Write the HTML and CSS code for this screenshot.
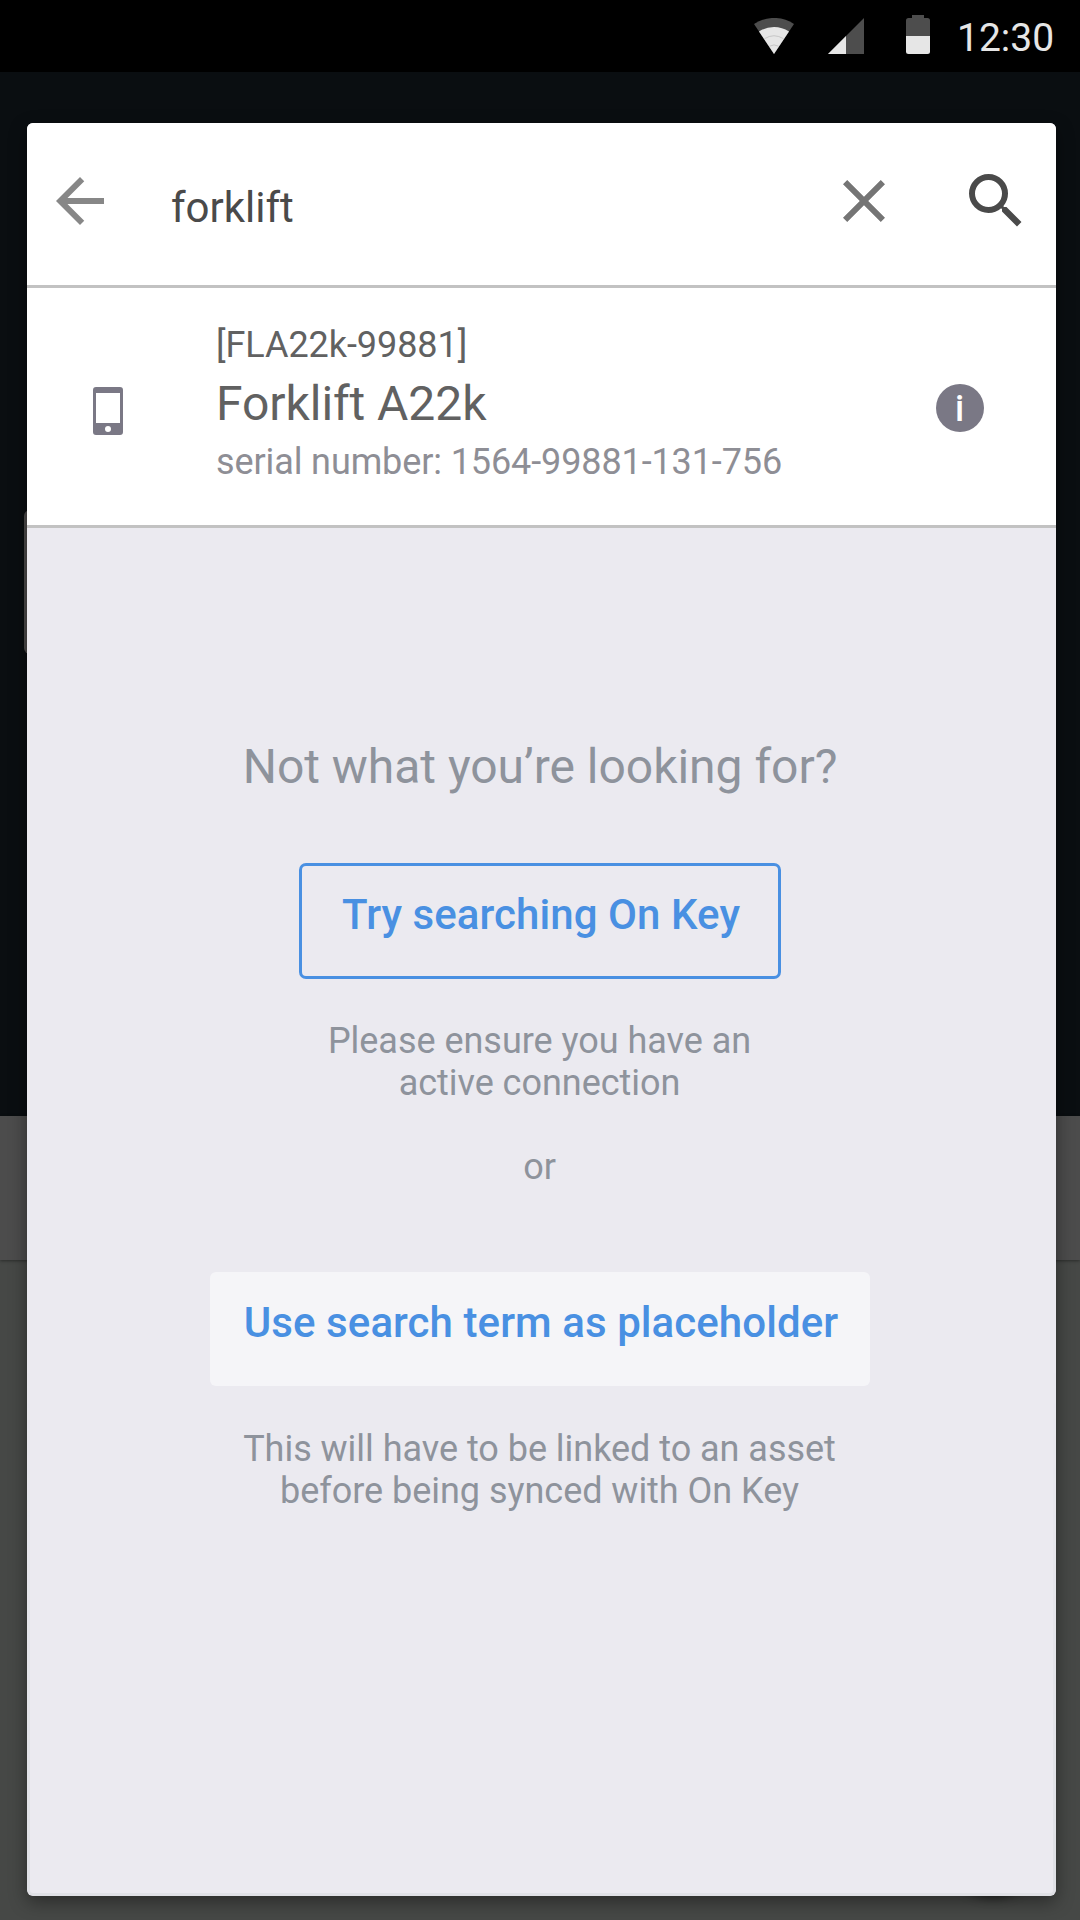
FILE: index.html
```html
<!DOCTYPE html>
<html lang="en">
<head>
<meta charset="utf-8">
<title>Asset search</title>
<link rel="stylesheet" href="styles.css">
</head>
<body>
<div class="screen">
  <div class="backdrop">
    <div class="backdrop-top"></div>
    <div class="backdrop-tabs"></div>
    <div class="backdrop-list"></div>
    <div class="backdrop-field"></div>
    <div class="backdrop-fab"></div>
  </div>
  <header class="status-bar">
    <svg class="wifi" width="40" height="36" viewBox="0 0 40 36">
      <path fill="#4d4d4d" d="M20 36L0 6a36 36 0 0 1 40 0z"/>
      <path fill="#e6e6e6" d="M20 36L5 13.5a27 27 0 0 1 30 0z"/>
      <path fill="none" stroke="#b8b8b8" stroke-width=".7" d="M10.5 20.7a18 18 0 0 1 19 0M15.5 28.2a9 9 0 0 1 9 0"/>
    </svg>
    <svg class="signal" width="36" height="36" viewBox="0 0 36 36">
      <path fill="#4d4d4d" d="M0 36L36 0v36z"/>
      <path fill="#e6e6e6" d="M0 36L18 18v18z"/>
    </svg>
    <svg class="battery" width="24" height="39" viewBox="0 0 24 39">
      <path fill="#4d4d4d" d="M6 0h12v3h3.5A2.5 2.5 0 0 1 24 5.500V21H0V5.500A2.500 2.500 0 0 1 2.500 3H6z"/>
      <path fill="#e6e6e6" d="M0 21h24v15.500a2.500 2.500 0 0 1-2.500 2.500h-19A2.500 2.500 0 0 1 0 36.500z"/>
    </svg>
    <span class="clock">12:30</span>
  </header>
  <main class="dialog">
    <div class="search-bar">
      <svg class="icon back" viewBox="0 0 24 24"><path d="M20 11H7.83l5.590-5.590L12 4l-8 8 8 8 1.410-1.410L7.830 13H20z"/></svg>
      <span class="query">forklift</span>
      <svg class="icon clear" viewBox="0 0 24 24"><path d="M19 6.410L17.590 5 12 10.590 6.410 5 5 6.410 10.590 12 5 17.590 6.410 19 12 13.410 17.590 19 19 17.590 13.410 12z"/></svg>
      <svg class="icon find" viewBox="0 0 24 24"><path d="M15.500 14h-.790l-.280-.270A6.470 6.470 0 0 0 16 9.500 6.500 6.500 0 1 0 9.500 16c1.610 0 3.090-.590 4.230-1.570l.270.280v.790l5 4.990L20.490 19zm-6 0a4.500 4.500 0 1 1 0-9 4.500 4.500 0 0 1 0 9z"/></svg>
    </div>
    <div class="result">
      <svg class="device" width="30" height="48" viewBox="0 0 30 48">
        <path fill="#7a7885" fill-rule="evenodd" d="M3 0h24a3 3 0 0 1 3 3v42a3 3 0 0 1-3 3H3a3 3 0 0 1-3-3V3a3 3 0 0 1 3-3zM3 6v30h24V6zM15 39a3 3 0 1 0 0 6 3 3 0 0 0 0-6z"/>
      </svg>
      <div class="result-text">
        <div class="code">[FLA22k-99881]</div>
        <div class="name">Forklift A22k</div>
        <div class="serial">serial number: 1564-99881-131-756</div>
      </div>
      <div class="info">i</div>
    </div>
    <div class="fallback">
      <h1 class="prompt">Not what you’re looking for?</h1>
      <button class="btn btn-outline">Try searching On Key</button>
      <p class="hint">Please ensure you have an<br>active connection</p>
      <p class="or">or</p>
      <button class="btn btn-flat">Use search term as placeholder</button>
      <p class="hint">This will have to be linked to an asset<br>before being synced with On Key</p>
    </div>
  </main>
</div>
</body>
</html>
```

FILE: styles.css
```css
* { box-sizing: border-box; }

body {
  margin: 0;
  font-family: Roboto, "Noto Sans", sans-serif;
}

.screen {
  position: relative;
  width: 1080px;
  height: 1920px;
  overflow: hidden;
}

/* dimmed page underneath the dialog */
.backdrop {
  position: absolute;
  inset: 0;
  display: flex;
  flex-direction: column;
}
.backdrop-top { height: 1116px; background: #0a0e11; }
.backdrop-tabs {
  position: relative;
  height: 144px;
  background: #4c4c4c;
  box-shadow: 0 1px 3px rgba(0, 0, 0, .4);
}
.backdrop-list { flex: 1; background: #464846; }
.backdrop-field {
  position: absolute;
  left: 24px;
  top: 510px;
  width: 1029px;
  height: 144px;
  border-radius: 6px;
  background: #4c4a4a;
}
.backdrop-fab {
  position: absolute;
  left: 942px;
  top: 1790px;
  width: 102px;
  height: 102px;
  border-radius: 50%;
  box-shadow: 0 6px 10px rgba(0, 0, 0, .5);
}

.status-bar {
  position: relative;
  display: flex;
  align-items: flex-start;
  height: 72px;
  padding: 18px 0 0 754px;
  background: #000;
}
.signal { margin-left: 34px; }
.battery { margin: -3px 0 0 42px; }
.clock {
  margin: 1px 0 0 27px;
  font-size: 39px;
  line-height: 39px;
  color: #e6e6e6;
}

.dialog {
  position: relative;
  display: flex;
  flex-direction: column;
  width: 1029px;
  height: 1773px;
  margin: 51px 0 0 27px;
  border-radius: 6px;
  overflow: hidden;
  background: #ebeaf0;
}
/* rim that fades in towards the bottom edge */
.dialog::after {
  content: "";
  position: absolute;
  inset: 0;
  border: 3px solid #e0e1e6;
  border-radius: 6px;
  -webkit-mask-image: linear-gradient(transparent 70%, #000 97%);
  mask-image: linear-gradient(transparent 70%, #000 97%);
  pointer-events: none;
}
.screen::after {
  content: "";
  position: absolute;
  left: 27px;
  top: 123px;
  width: 1029px;
  height: 1773px;
  border-radius: 6px;
  box-shadow: 0 6px 18px rgba(0, 0, 0, .4);
  pointer-events: none;
}

.search-bar {
  display: flex;
  align-items: flex-start;
  height: 165px;
  padding: 42px 24px 0 17px;
  border-bottom: 3px solid #c2c2c2;
  background: #fff;
}
.icon { width: 72px; height: 72px; flex: none; }
.back { fill: #878787; }
.query {
  flex: 1;
  padding: 18px 0 0 55px;
  font-size: 42px;
  line-height: 50px;
  color: #4a4a4a;
}
.clear { fill: #757575; margin-right: 60px; }
.find { fill: #4a4a4a; }

.result {
  display: flex;
  align-items: flex-start;
  height: 240px;
  padding: 0 72px 0 66px;
  border-bottom: 3px solid #c2c2c2;
  background: #fff;
}
.device { margin-top: 99px; }
.result-text {
  flex: 1;
  padding: 36px 0 0 93px;
}
.code { font-size: 36px; line-height: 42px; letter-spacing: -.06px; color: #616161; }
.name { font-size: 48px; line-height: 76px; letter-spacing: -.06px; color: #616161; }
.serial { font-size: 36px; line-height: 40px; letter-spacing: -.11px; color: #8e8e95; }
.info {
  width: 48px;
  height: 48px;
  margin-top: 96px;
  padding-right: 1px;
  border-radius: 50%;
  background: #7a7885;
  color: #fff;
  font-size: 36px;
  font-weight: 500;
  line-height: 51px;
  text-align: center;
}

.fallback {
  flex: 1;
  display: flex;
  flex-direction: column;
  align-items: center;
  padding: 211px 3px 0 0;
  text-align: center;
  color: #8e939c;
}
.prompt {
  margin: 0;
  font-size: 48px;
  font-weight: 400;
  line-height: 56px;
  letter-spacing: -.02px;
}
.btn {
  display: block;
  margin: 0;
  padding: 0 0 0 2px;
  border: 0;
  border-radius: 6px;
  font: 500 42px/50px Roboto, "Noto Sans", sans-serif;
  letter-spacing: .07px;
  color: #4990e2;
}
.btn-outline {
  width: 482px;
  height: 116px;
  margin-top: 68px;
  padding-bottom: 13px;
  border: 3px solid #4990e2;
  border-radius: 7px;
  background: transparent;
}
.hint, .or {
  margin: 0;
  padding-right: 1px;
  font-size: 36px;
  line-height: 42px;
  letter-spacing: -.03px;
}
.btn-outline + .hint { margin-top: 41px; }
.or { margin-top: 42px; }
.btn-flat {
  width: 660px;
  height: 114px;
  margin-top: 84px;
  padding-bottom: 13px;
  background: #f5f5f8;
}
.btn-flat + .hint { margin-top: 42px; }
```
